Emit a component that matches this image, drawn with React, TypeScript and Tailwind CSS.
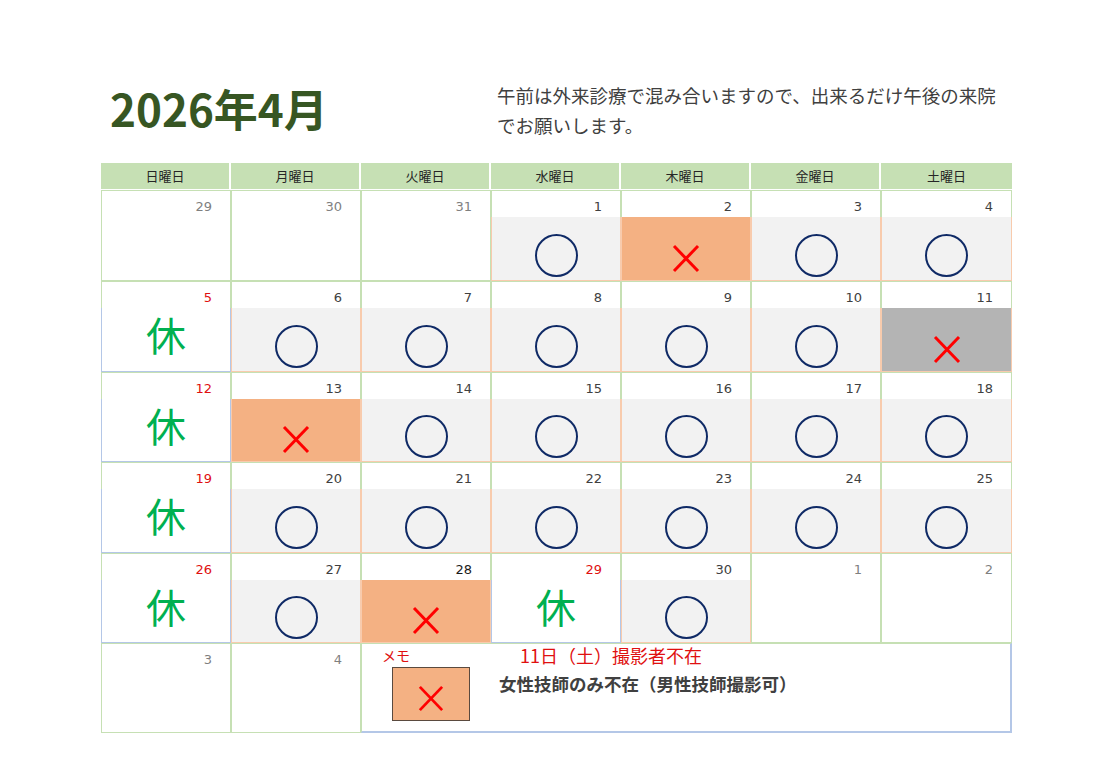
import React from 'react';

type Kind = 'empty' | 'ok' | 'ng' | 'ngGray' | 'rest';
type Tone = 'gray' | 'dark' | 'red' | 'black';

interface Day {
  d: number;
  kind: Kind;
  tone: Tone;
}

const weekdays = ['日曜日', '月曜日', '火曜日', '水曜日', '木曜日', '金曜日', '土曜日'];

const ok = (d: number): Day => ({ d, kind: 'ok', tone: 'dark' });
const rest = (d: number): Day => ({ d, kind: 'rest', tone: 'red' });
const other = (d: number): Day => ({ d, kind: 'empty', tone: 'gray' });

const weeks: Day[][] = [
  [other(29), other(30), other(31), ok(1), { d: 2, kind: 'ng', tone: 'dark' }, ok(3), ok(4)],
  [rest(5), ok(6), ok(7), ok(8), ok(9), ok(10), { d: 11, kind: 'ngGray', tone: 'dark' }],
  [rest(12), { d: 13, kind: 'ng', tone: 'dark' }, ok(14), ok(15), ok(16), ok(17), ok(18)],
  [rest(19), ok(20), ok(21), ok(22), ok(23), ok(24), ok(25)],
  [rest(26), ok(27), { d: 28, kind: 'ng', tone: 'black' }, rest(29), ok(30), other(1), other(2)],
];

const rowHeights = ['h-[91px]', 'h-[91px]', 'h-[90px]', 'h-[91px]', 'h-[90px]'];

const toneClass: Record<Tone, string> = {
  gray: 'text-[#7f7f7f]',
  dark: 'text-[#404040]',
  red: 'text-[#e01010]',
  black: 'text-[#1a1a1a]',
};

function Cross({ size = 28 }: { size?: number }) {
  return (
    <svg width={size} height={size + 1} viewBox="0 0 28 29">
      <line x1="2" y1="2" x2="26" y2="27" stroke="#ff0000" strokeWidth="3" />
      <line x1="26" y1="2" x2="2" y2="27" stroke="#ff0000" strokeWidth="3" />
    </svg>
  );
}

function DateLabel({ day }: { day: Day }) {
  return (
    <div className={`pt-[8px] pr-[18px] text-right text-[13px] leading-[16px] font-['DejaVu_Sans',sans-serif] ${toneClass[day.tone]}`}>
      {day.d}
    </div>
  );
}

function DayCell({ day }: { day: Day }) {
  if (day.kind === 'empty') {
    return (
      <div className="border border-[#c6e0b4] bg-white">
        <DateLabel day={day} />
      </div>
    );
  }

  let lower = '';
  let body: React.ReactNode = null;
  if (day.kind === 'ok') {
    lower = 'bg-[#f2f2f2] border-[#f8cbad] items-end pb-[3px]';
    body = <div className="w-[43px] h-[43px] rounded-full border-2 border-[#0f2a66]" />;
  } else if (day.kind === 'ng') {
    lower = 'bg-[#f4b183] border-[#f8cbad] items-end pb-[7px]';
    body = <Cross />;
  } else if (day.kind === 'ngGray') {
    lower = 'bg-[#b4b4b4] border-[#f8cbad] items-end pb-[7px]';
    body = <Cross />;
  } else {
    lower = 'bg-white border-[#b4c7e7] items-start pt-[6px]';
    body = <span className="text-[40px] leading-[40px] text-[#00b050]">休</span>;
  }

  return (
    <div className="flex flex-col">
      <div className="h-[27px] border-t border-x border-[#c6e0b4] bg-white">
        <DateLabel day={day} />
      </div>
      <div className={`flex-1 flex justify-center border-x border-b ${lower}`}>{body}</div>
    </div>
  );
}

export default function App() {
  return (
    <div className="w-[1113px] h-[784px] bg-white pl-[101px] pt-[80px] font-['Noto_Sans_CJK_JP',sans-serif]">
      {/* Title + note */}
      <div className="flex h-[83px]">
        <div className="w-[396px] pl-[9px] pt-[6px]">
          <h1 className="text-[44px] leading-[44px] font-bold text-[#375623]">2026年4月</h1>
        </div>
        <p className="text-[18.5px] leading-[30px] text-[#404040]">
          午前は外来診療で混み合いますので、出来るだけ午後の来院
          <br />
          でお願いします。
        </p>
      </div>

      {/* Calendar */}
      <div className="w-[911px]">
        <div className="grid grid-cols-[repeat(6,130px)_131px] h-[27px]">
          {weekdays.map((w, i) => (
            <div
              key={w}
              className={`h-[26px] bg-[#c6e0b4] flex items-center justify-center text-[13px] text-[#262626] ${i < 6 ? 'border-r-2 border-white' : ''}`}>
              {w}
            </div>
          ))}
        </div>

        {weeks.map((week, r) => (
          <div key={r} className={`grid grid-cols-[repeat(6,130px)_131px] ${rowHeights[r]}`}>
            {week.map((day, c) => (
              <DayCell key={c} day={day} />
            ))}
          </div>
        ))}

        {/* Last row with memo */}
        <div className="grid grid-cols-[repeat(6,130px)_131px] h-[90px]">
          <div className="border border-[#c6e0b4]">
            <DateLabel day={other(3)} />
          </div>
          <div className="border border-[#c6e0b4]">
            <DateLabel day={other(4)} />
          </div>
          <div className="col-span-5 border-t border-l border-[#c6e0b4] border-r-2 border-r-[#b4c7e7] border-b-2 border-b-[#b4c7e7] flex flex-col">
            <div className="flex items-center h-[23px] pl-[20px]">
              <span className="text-[14px] text-[#e01010]">メモ</span>
              <span className="ml-[110px] text-[18px] text-[#e01010]">11日（土）撮影者不在</span>
            </div>
            <div className="flex">
              <div className="ml-[30px] w-[78px] h-[54px] bg-[#f4b183] border border-[#5a4a3f] flex items-end justify-center pb-[8px]">
                <Cross size={26} />
              </div>
              <div className="ml-[29px] mt-[5px] text-[17.5px] leading-[24px] font-bold text-[#404040]">
                女性技師のみ不在（男性技師撮影可）
              </div>
            </div>
          </div>
        </div>
      </div>
    </div>
  );
}
